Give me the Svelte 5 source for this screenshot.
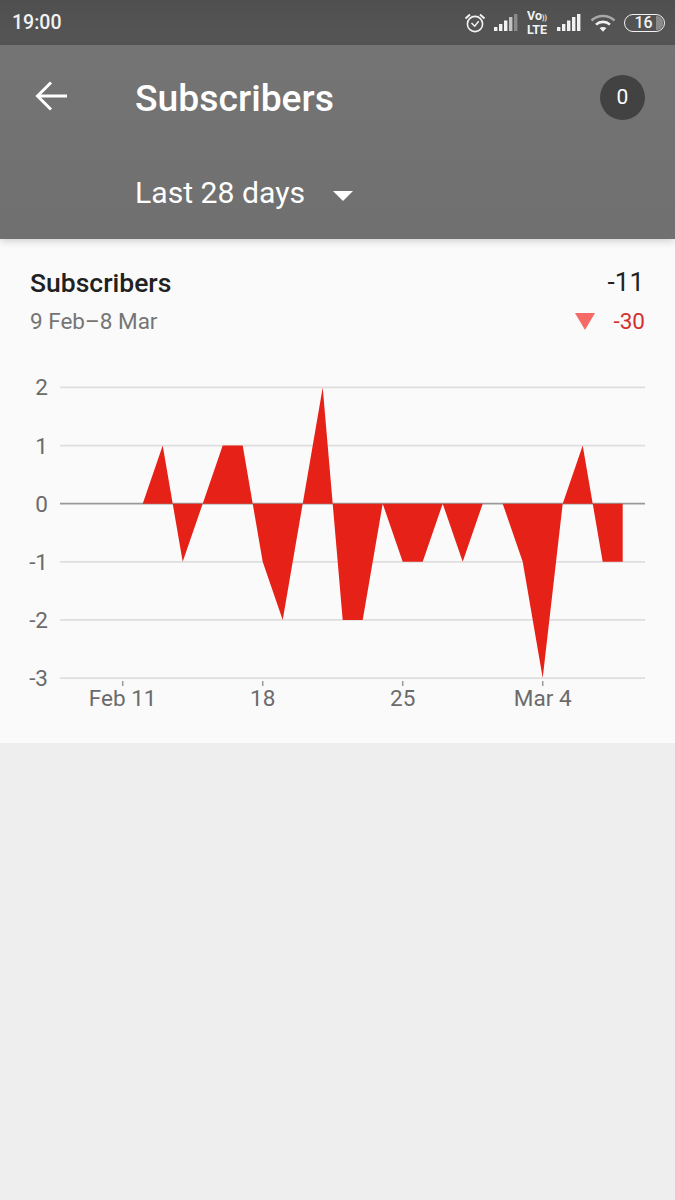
<script>
  // daily values, Feb 9 to Mar 8
  const values = [0, 0, 0, 0, 1, -1, 0, 1, 1, -1, -2, 0, 2, -2, -2, 0, -1, -1, 0, -1, 0, 0, -1, -3, 0, 1, -1, -1];
  const yTicks = [2, 1, 0, -1, -2, -3];
  const xTicks = [
    { label: 'Feb 11', day: 2 },
    { label: '18', day: 9 },
    { label: '25', day: 16 },
    { label: 'Mar 4', day: 23 }
  ];

  const originY = 133.7;
  const stepY = 58.13;
  const xAt = (day) => 82.7 + day * 20;
  const yAt = (v) => originY - v * stepY;

  const points = values.map((v, i) => `${xAt(i)},${yAt(v)}`).join(' ');
  const area = `${xAt(0)},${originY} ${points} ${xAt(values.length - 1)},${originY}`;
</script>

<div class="screen">
  <div class="status-bar">
    <span class="clock">19:00</span>
    <div class="status-icons">
      <svg width="22" height="22" viewBox="0 0 22 22" fill="none" stroke="#f2f2f2">
        <circle cx="11" cy="12" r="7.6" stroke-width="1.6" />
        <path d="M7.5 11l3.2 3.2 4-5" stroke-width="1.5" />
        <path d="M1.5 6.5L6 2.5M20.5 6.5L16 2.5" stroke-width="2" />
      </svg>
      <svg class="signal" width="25" height="18" viewBox="0 0 25 18" fill="#f2f2f2">
        <rect x="0" y="13" width="3.4" height="4" />
        <rect x="5" y="10" width="3.4" height="7" />
        <rect x="10" y="6.500" width="3.4" height="10.500" />
        <rect x="15" y="3" width="3.4" height="14" opacity="0.7" />
        <rect x="20" y="0" width="3.4" height="17" opacity="0.35" />
      </svg>
      <div class="volte"><span>Vo<small>))</small></span><span>LTE</span></div>
      <svg class="signal" width="25" height="18" viewBox="0 0 25 18" fill="#f2f2f2">
        <rect x="0" y="13" width="3.4" height="4" />
        <rect x="5" y="10" width="3.4" height="7" />
        <rect x="10" y="6.500" width="3.4" height="10.500" />
        <rect x="15" y="3" width="3.4" height="14" />
        <rect x="20" y="0" width="3.4" height="17" />
      </svg>
      <svg width="26" height="18" viewBox="0 0 26 18" fill="none">
        <path d="M1.500 6.500C8 .5 18 .5 24.500 6.500" stroke="#a8a8a8" stroke-width="2.6" />
        <path d="M6 10.600c4-3.600 10-3.600 14 0" stroke="#f2f2f2" stroke-width="2.6" />
        <path d="M13 17.800l-3.400-3.800c2-1.400 4.800-1.400 6.800 0z" fill="#f2f2f2" />
      </svg>
      <div class="battery">
        <span class="battery-level"></span>
        <span class="battery-text">16</span>
      </div>
    </div>
  </div>

  <header class="app-bar">
    <div class="title-row">
      <button class="back" aria-label="Back">
        <svg width="32" height="30" viewBox="0 0 32 30" fill="none" stroke="#fff" stroke-width="3">
          <path d="M32 15H3M16 1.500L2.500 15 16 28.500" />
        </svg>
      </button>
      <h1>Subscribers</h1>
      <span class="badge">0</span>
    </div>
    <div class="range">
      <span>Last 28 days</span>
      <i class="caret"></i>
    </div>
  </header>

  <section class="card">
    <div class="summary">
      <div class="summary-row">
        <span class="name">Subscribers</span>
        <span class="total">-11</span>
      </div>
      <div class="summary-row second">
        <span class="dates">9 Feb–8 Mar</span>
        <span class="delta"><i class="down"></i>-30</span>
      </div>
    </div>

    <svg class="chart" width="675" height="370" viewBox="0 0 675 370">
      {#each yTicks as t}
        <line class="grid" class:zero={t === 0} x1="60" x2="645" y1={yAt(t)} y2={yAt(t)} />
        <text class="axis" x="48" y={yAt(t) + 8} text-anchor="end">{t}</text>
      {/each}
      <polygon class="area" points={area} />
      {#each xTicks as t}
        <line class="tick" x1={xAt(t.day)} x2={xAt(t.day)} y1="311" y2="316" />
        <text class="axis" x={xAt(t.day)} y="336" text-anchor="middle">{t.label}</text>
      {/each}
    </svg>
  </section>
</div>

<style>
  :global(body) {
    background: #eeeeee;
  }

  .screen {
    width: 675px;
    height: 1200px;
    background: #eeeeee;
    font-family: Roboto, sans-serif;
    overflow: hidden;
  }

  .status-bar {
    height: 45px;
    display: flex;
    align-items: center;
    justify-content: space-between;
    padding: 0 10px 0 12px;
    background: linear-gradient(#4f4f4f, #565656);
    color: #f2f2f2;
    box-sizing: border-box;
  }

  .clock {
    font-size: 19.5px;
    font-weight: 500;
  }

  .status-icons {
    display: flex;
    align-items: center;
    gap: 8px;
  }

  .signal {
    margin-top: 1px;
  }

  .volte {
    display: flex;
    flex-direction: column;
    font-size: 12.5px;
    font-weight: 700;
    line-height: 11px;
    width: 22px;
  }

  .volte small {
    font-size: 7px;
  }

  .battery {
    position: relative;
    width: 41px;
    height: 18px;
    border: 1.500px solid #f2f2f2;
    border-radius: 9px;
    box-sizing: border-box;
    overflow: hidden;
    text-align: center;
  }

  .battery-level {
    position: absolute;
    right: 1px;
    top: 1px;
    bottom: 1px;
    width: 7px;
    border-radius: 0 6px 6px 0;
    background: #8a8a8a;
  }

  .battery-text {
    position: relative;
    font-size: 16px;
    font-weight: 500;
    line-height: 15px;
    display: block;
    padding-right: 2px;
  }

  .app-bar {
    height: 194px;
    background: linear-gradient(#747474, #707070);
    color: #fff;
    box-sizing: border-box;
    padding-top: 30px;
    box-shadow: 0 2px 8px rgba(0, 0, 0, 0.18);
    position: relative;
  }

  .title-row {
    display: flex;
    align-items: center;
    height: 48px;
    padding: 0 30px 0 35px;
  }

  .back {
    background: none;
    border: 0;
    padding: 0;
    width: 100px;
    height: 30px;
    display: flex;
    margin-top: -6px;
  }

  h1 {
    flex: 1;
    margin: -2px 0 0;
    font-size: 37.3px;
    font-weight: 500;
    line-height: 48px;
  }

  .badge {
    width: 45px;
    height: 45px;
    border-radius: 50%;
    background: #424242;
    display: flex;
    align-items: center;
    justify-content: center;
    font-size: 21px;
    margin-top: -4px;
  }

  .range {
    display: flex;
    align-items: center;
    gap: 28px;
    margin-top: 52px;
    padding-left: 135px;
    font-size: 30.2px;
    line-height: 36px;
  }

  .caret {
    width: 0;
    height: 0;
    border-left: 10px solid transparent;
    border-right: 10px solid transparent;
    border-top: 10px solid #fff;
    margin-top: 6px;
  }

  .card {
    height: 504px;
    background: #fafafa;
  }

  .summary {
    padding: 27px 30px 33px;
  }

  .summary-row {
    display: flex;
    justify-content: space-between;
    align-items: center;
    height: 32px;
  }

  .second {
    margin-top: 7px;
  }

  .name {
    font-size: 26.500px;
    font-weight: 500;
    color: #212121;
  }

  .total {
    font-size: 26px;
    color: #212121;
    margin-right: 1px;
  }

  .dates {
    font-size: 22.500px;
    color: #757575;
  }

  .delta {
    display: flex;
    align-items: center;
    gap: 18px;
    font-size: 22.500px;
    color: #d32f2f;
  }

  .down {
    width: 0;
    height: 0;
    border-left: 10px solid transparent;
    border-right: 10px solid transparent;
    border-top: 17px solid #f66a66;
  }

  .chart {
    display: block;
  }

  .grid {
    stroke: #dedede;
    stroke-width: 1.8;
  }

  .grid.zero {
    stroke: #999999;
  }

  .tick {
    stroke: #999999;
    stroke-width: 1.500;
  }

  .area {
    fill: #e62117;
  }

  .axis {
    font-size: 22.500px;
    fill: #6b6b6b;
  }
</style>
